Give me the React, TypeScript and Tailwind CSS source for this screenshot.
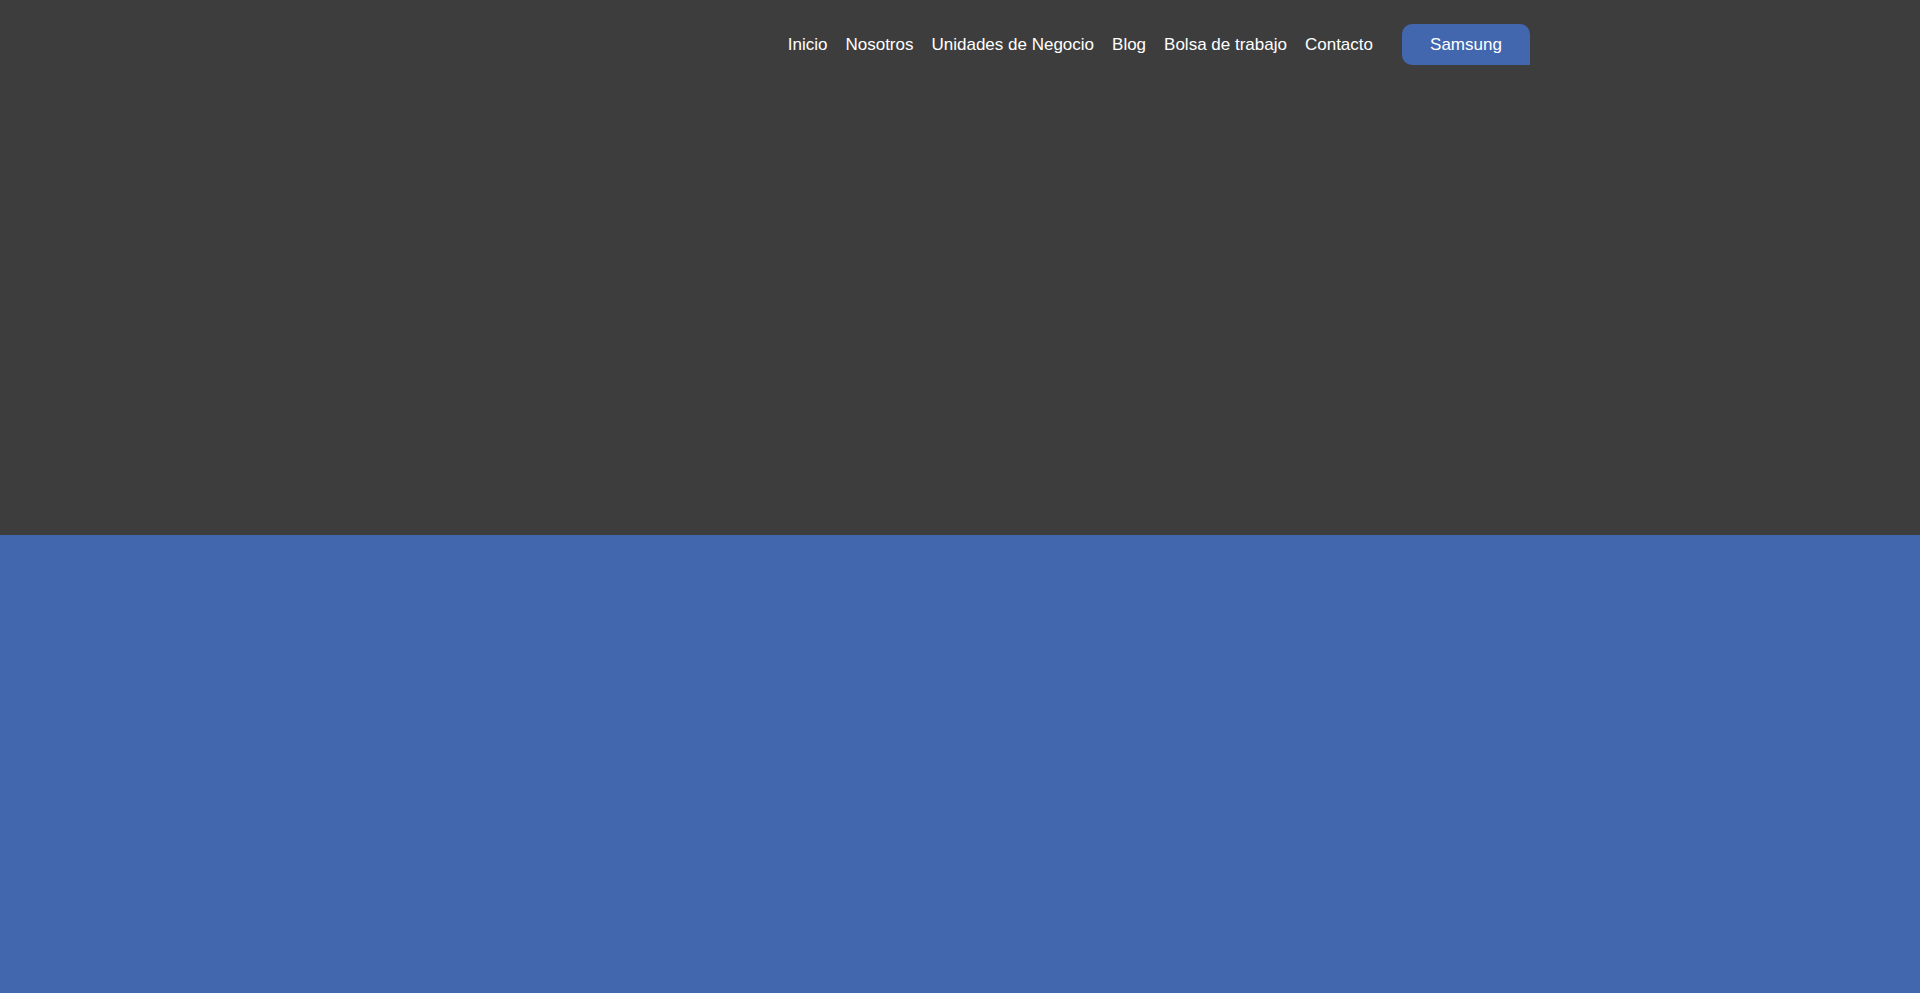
export default function App() {
  return (
    <div className="w-full h-[993px] flex flex-col" style={{ fontFamily: '"Liberation Sans", Arial, sans-serif' }}>
      <div className="h-[535px] bg-[#3d3d3d] flex justify-end items-start pr-[390px] pt-[24px]">
        <nav className="flex items-center h-[41px] text-white text-[17px]">
          <div className="flex gap-[18px]">
            <span>Inicio</span>
            <span>Nosotros</span>
            <span>Unidades de Negocio</span>
            <span>Blog</span>
            <span>Bolsa de trabajo</span>
            <span>Contacto</span>
          </div>
          <button className="ml-[29px] w-[128px] h-[41px] bg-[#4267ae] text-white text-[17px] rounded-t-[10px] rounded-bl-[10px]">Samsung</button>
        </nav>
      </div>
      <div className="flex-1 bg-[#4267ae]" />
    </div>
  );
}
